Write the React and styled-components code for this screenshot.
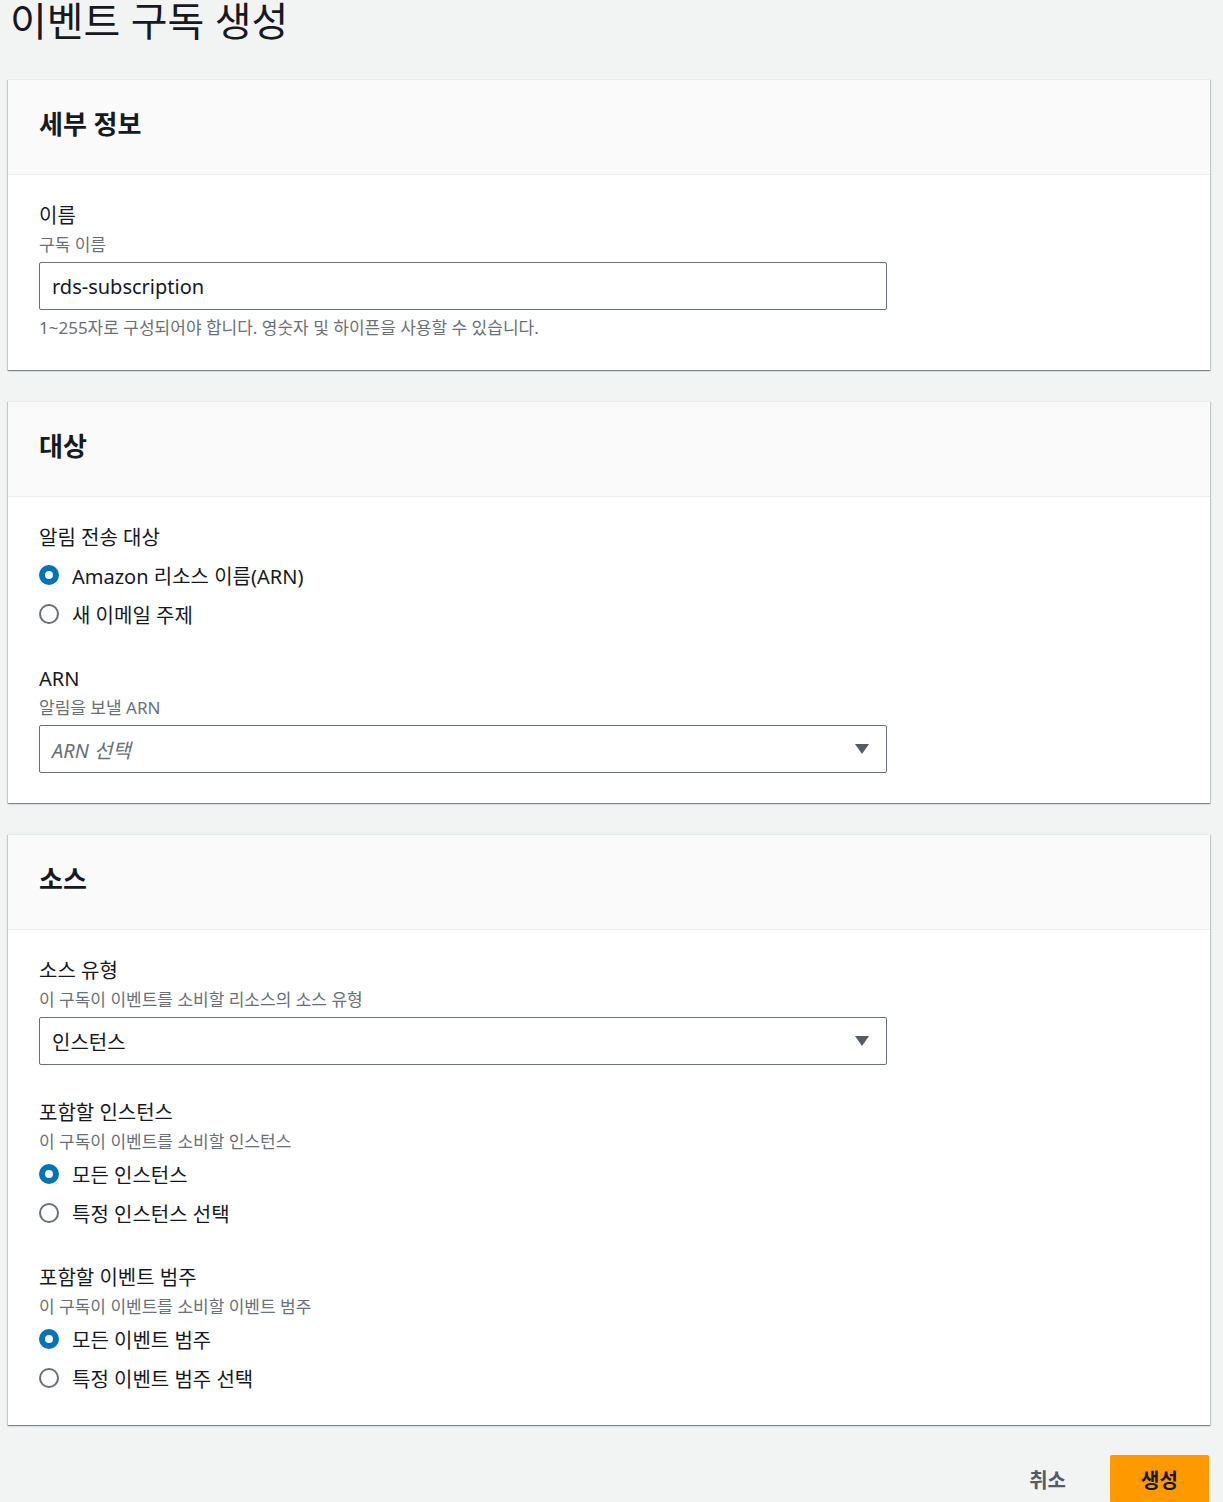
import React from "react"
import styled, { createGlobalStyle } from "styled-components"

const GlobalStyle = createGlobalStyle`
  body {
    margin: 0;
    background: #f2f3f3;
    font-family: "Noto Sans", "Noto Sans CJK KR", sans-serif;
    color: #16191f;
  }
`

const RadioGroup = ({ options, checked, afterDesc }) => (
  <Radios $afterDesc={afterDesc}>
    {options.map((opt, i) => (
      <RadioRow key={opt}>
        <RadioDot $on={i === checked} />
        <RadioText>{opt}</RadioText>
      </RadioRow>
    ))}
  </Radios>
)

const Select = ({ value, placeholder }) => (
  <SelectBox>
    {value ? <SelectValue>{value}</SelectValue> : <Placeholder>{placeholder}</Placeholder>}
    <Caret viewBox="0 0 16 12">
      <path d="M1 1h14l-7 10z" fill="#545b64" />
    </Caret>
  </SelectBox>
)

const App = () => {
  return (
    <>
      <GlobalStyle />
      <Page>
        <Title>이벤트 구독 생성</Title>

        <Card>
          <CardHeader>세부 정보</CardHeader>
          <CardBody>
            <Field>
              <Label>이름</Label>
              <Desc>구독 이름</Desc>
              <Input defaultValue="rds-subscription" />
              <Constraint>1~255자로 구성되어야 합니다. 영숫자 및 하이픈을 사용할 수 있습니다.</Constraint>
            </Field>
          </CardBody>
        </Card>

        <Card>
          <CardHeader>대상</CardHeader>
          <CardBody>
            <Field>
              <Label>알림 전송 대상</Label>
              <RadioGroup options={["Amazon 리소스 이름(ARN)", "새 이메일 주제"]} checked={0} />
            </Field>
            <Field>
              <Label>ARN</Label>
              <Desc>알림을 보낼 ARN</Desc>
              <Select placeholder="ARN 선택" />
            </Field>
          </CardBody>
        </Card>

        <Card>
          <CardHeader>소스</CardHeader>
          <CardBody>
            <Field>
              <Label>소스 유형</Label>
              <Desc>이 구독이 이벤트를 소비할 리소스의 소스 유형</Desc>
              <Select value="인스턴스" />
            </Field>
            <Field>
              <Label>포함할 인스턴스</Label>
              <Desc>이 구독이 이벤트를 소비할 인스턴스</Desc>
              <RadioGroup options={["모든 인스턴스", "특정 인스턴스 선택"]} checked={0} afterDesc />
            </Field>
            <Field>
              <Label>포함할 이벤트 범주</Label>
              <Desc>이 구독이 이벤트를 소비할 이벤트 범주</Desc>
              <RadioGroup options={["모든 이벤트 범주", "특정 이벤트 범주 선택"]} checked={0} afterDesc />
            </Field>
          </CardBody>
        </Card>

        <Actions>
          <LinkButton>취소</LinkButton>
          <PrimaryButton>생성</PrimaryButton>
        </Actions>
      </Page>
    </>
  )
}

const Page = styled.div`
  padding: 0 13px 0 8px;
  display: flex;
  flex-direction: column;
`

const Title = styled.h1`
  margin: -7px 0 30px 2px;
  font-size: 40px;
  font-weight: 400;
  line-height: 56px;
`

const Card = styled.section`
  background: #fff;
  border-top: 1px solid #eaeded;
  box-shadow: 0 1px 1px 0 rgba(0, 28, 36, 0.3), 1px 1px 1px 0 rgba(0, 28, 36, 0.15),
    -1px 1px 1px 0 rgba(0, 28, 36, 0.15);
  margin-bottom: 31px;
`

const CardHeader = styled.h2`
  margin: 0;
  height: 95px;
  box-sizing: border-box;
  display: flex;
  align-items: center;
  padding: 0 31px 8px;
  background: #fafafa;
  border-bottom: 1px solid #eaeded;
  font-size: 26px;
  font-weight: 700;
`

const CardBody = styled.div`
  padding: 26px 31px 30px;
  display: flex;
  flex-direction: column;
  gap: 33px;
`

const Field = styled.div`
  display: flex;
  flex-direction: column;
`

const Label = styled.div`
  padding-top: 2px;
  font-size: 20px;
  line-height: 26px;
`

const Desc = styled.div`
  margin-top: 4px;
  margin-bottom: 5px;
  font-size: 17px;
  line-height: 24px;
  color: #687078;
`

const Input = styled.input`
  width: 848px;
  height: 48px;
  box-sizing: border-box;
  border: 1px solid #687078;
  border-radius: 2px;
  padding: 0 12px;
  font-family: inherit;
  font-size: 20px;
  color: #16191f;
  outline: none;
`

const Constraint = styled.div`
  margin-top: 6px;
  font-size: 17px;
  line-height: 24px;
  color: #687078;
`

const SelectBox = styled.div`
  width: 848px;
  height: 48px;
  box-sizing: border-box;
  border: 1px solid #687078;
  border-radius: 2px;
  padding: 0 16px 0 12px;
  display: flex;
  align-items: center;
  justify-content: space-between;
`

const SelectValue = styled.span`
  font-size: 20px;
`

const Placeholder = styled.span`
  font-size: 20px;
  font-style: italic;
  color: #687078;
`

const Caret = styled.svg`
  width: 16px;
  height: 12px;
`

const Radios = styled.div`
  margin-top: ${(p) => (p.$afterDesc ? "0px" : "9px")};
  padding-bottom: 2px;
  display: flex;
  flex-direction: column;
  gap: 9px;
`

const RadioRow = styled.label`
  height: 30px;
  display: flex;
  align-items: center;
  gap: 13px;
`

const RadioDot = styled.span`
  width: 20px;
  height: 20px;
  box-sizing: border-box;
  border-radius: 50%;
  background: #fff;
  border: ${(p) => (p.$on ? "6px solid #0073bb" : "2px solid #687078")};
`

const RadioText = styled.span`
  font-size: 20px;
`

const Actions = styled.div`
  display: flex;
  justify-content: flex-end;
  align-items: center;
  gap: 44px;
  margin-top: -1px;
  padding-right: 1px;
`

const LinkButton = styled.button`
  border: none;
  background: none;
  font-family: inherit;
  font-size: 20px;
  font-weight: 700;
  color: #545b64;
  padding: 0;
`

const PrimaryButton = styled.button`
  width: 99px;
  height: 48px;
  border: none;
  border-radius: 2px;
  background: #ff9900;
  font-family: inherit;
  font-size: 20px;
  font-weight: 700;
  color: #16191f;
`

export default App
